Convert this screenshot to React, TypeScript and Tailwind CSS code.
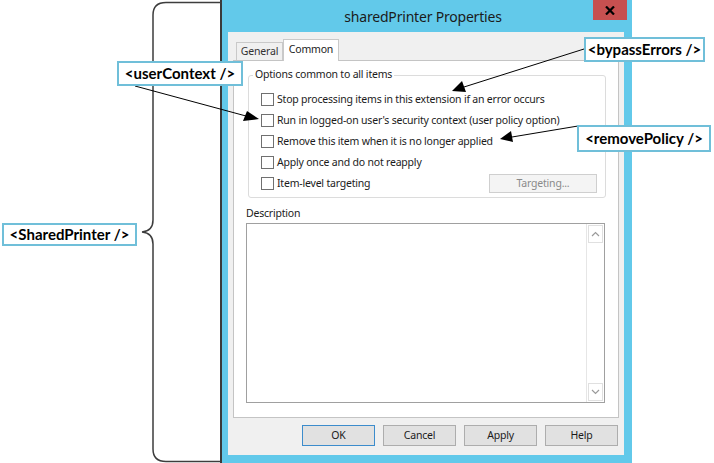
import React from "react";

const rows = [
  "Stop processing items in this extension if an error occurs",
  "Run in logged-on user's security context (user policy option)",
  "Remove this item when it is no longer applied",
  "Apply once and do not reapply",
  "Item-level targeting",
];

function Checkbox() {
  return <div className="w-[13px] h-[13px] border border-[#707070] bg-white shrink-0" />;
}

function Tag({ text, cls }: { text: string; cls: string }) {
  return (
    <div
      className={
        "absolute flex items-center justify-center bg-white border-2 border-[#70bfd9] text-[15px] font-bold text-black font-['Lato',sans-serif] " +
        cls
      }
    >
      {text}
    </div>
  );
}

export default function App() {
  return (
    <div className="relative w-[714px] h-[463px] bg-white overflow-hidden flex font-['Noto_Sans',sans-serif]">
      {/* Dialog window */}
      <div className="ml-[220px] w-[412px] h-[463px] border-l-2 border-[#3a3a3a] bg-[#62c9ea] flex flex-col">
        <div className="relative h-[32px] flex items-center justify-center">
          <span className="text-[14px] tracking-[-0.2px] text-[#1b1b1b] -ml-[8px]">sharedPrinter Properties</span>
          <div className="absolute right-[5px] top-0 w-[34px] h-[20px] bg-[#c75050] flex items-center justify-center">
            <svg width="10" height="9" viewBox="0 0 10 9">
              <path d="M1 0.5 L9 8.5 M9 0.5 L1 8.5" stroke="#000" strokeWidth="2.2" />
            </svg>
          </div>
        </div>
        <div className="ml-[6px] mr-[8px] mb-[8px] flex-1 bg-[#f0f0f0] flex flex-col px-[5px] pt-[7px] text-[10.5px] tracking-[-0.2px] text-[#1b1b1b]">
          {/* Tabs */}
          <div className="flex items-end h-[21px] ml-[3px] relative z-10">
            <div className="w-[47px] h-[18px] border border-b-0 border-[#c9c9c9] bg-[#f0f0f0] flex items-center justify-center text-[#333]">
              General
            </div>
            <div className="w-[56px] h-[22px] -mb-px border border-b-0 border-[#c9c9c9] bg-white flex items-start justify-center pt-[2px]">
              Common
            </div>
          </div>
          {/* Panel */}
          <div className="h-[358px] border border-[#c4c4c4] bg-white flex flex-col pt-[14px] pb-[14px] pl-[12px] pr-[13px]">
            <div className="relative ml-[2px] mr-[-1px] h-[123px] border border-[#dcdcdc] rounded-[3px] pt-[13px] pl-[12px] pr-[8px]">
              <span className="absolute -top-[9px] left-[4px] bg-white px-[2px]">Options common to all items</span>
              <div className="flex flex-col">
                {rows.map((r, i) => (
                  <div key={i} className="h-[21px] flex items-center gap-[3px]">
                    <Checkbox />
                    <span className="whitespace-nowrap">{r}</span>
                    {i === 4 && (
                      <div className="ml-auto w-[108px] h-[19px] border border-[#cfcfcf] bg-[#f4f4f4] text-[#8a8a8a] flex items-center justify-center">
                        Targeting...
                      </div>
                    )}
                  </div>
                ))}
              </div>
            </div>
            <div className="mt-[8px] h-[15px] leading-[15px]">Description</div>
            <div className="mt-[2px] h-[180px] border border-[#a0a0a0] bg-white flex justify-end">
              <div className="w-[18px] flex flex-col justify-between border-l border-[#e6e6e6] p-px">
                <div className="h-[18px] border border-[#e0e0e0] flex items-center justify-center">
                  <svg width="9" height="6" viewBox="0 0 9 6">
                    <path d="M1 5 L4.5 1.5 L8 5" stroke="#9a9a9a" strokeWidth="1.2" fill="none" />
                  </svg>
                </div>
                <div className="h-[18px] border border-[#e0e0e0] flex items-center justify-center">
                  <svg width="9" height="6" viewBox="0 0 9 6">
                    <path d="M1 1 L4.5 4.5 L8 1" stroke="#9a9a9a" strokeWidth="1.2" fill="none" />
                  </svg>
                </div>
              </div>
            </div>
          </div>
          {/* Buttons */}
          <div className="mt-[7px] flex justify-end gap-[8px] pr-[1px]">
            {["OK", "Cancel", "Apply", "Help"].map((b) => (
              <div
                key={b}
                className={
                  "w-[73px] h-[21px] bg-[#e1e1e1] border flex items-center justify-center " +
                  (b === "OK" ? "border-[#3c8ccc]" : "border-[#adadad]")
                }
              >
                {b}
              </div>
            ))}
          </div>
        </div>
      </div>

      {/* Brace and arrows */}
      <svg className="absolute left-0 top-0" width="714" height="463" viewBox="0 0 714 463">
        <path
          d="M222 2.5 L166 2.5 Q153 2.5 153 15 L153 220 Q153 231 142 232 Q153 233 153 244 L153 449 Q153 461.5 166 461.5 L222 461.5"
          stroke="#3d3d3d"
          strokeWidth="1.5"
          fill="none"
        />
        <line x1="135" y1="86" x2="246" y2="116" stroke="#000" strokeWidth="1" />
        <polygon points="259,119 243,121 247,111" fill="#000" />
        <line x1="584" y1="49" x2="464" y2="87" stroke="#000" strokeWidth="1" />
        <polygon points="452,91 462,81 466,92" fill="#000" />
        <line x1="578" y1="126" x2="512" y2="137" stroke="#000" strokeWidth="1" />
        <polygon points="500,139 511,131 513,142" fill="#000" />
      </svg>

      <Tag text="<userContext />" cls="left-[117px] top-[61px] w-[126px] h-[25px]" />
      <Tag text="<bypassErrors />" cls="left-[584px] top-[37px] w-[121px] h-[25px]" />
      <Tag text="<removePolicy />" cls="left-[577px] top-[125px] w-[134px] h-[27px]" />
      <Tag text="<SharedPrinter />" cls="left-[2px] top-[223px] w-[135px] h-[23px]" />
    </div>
  );
}
